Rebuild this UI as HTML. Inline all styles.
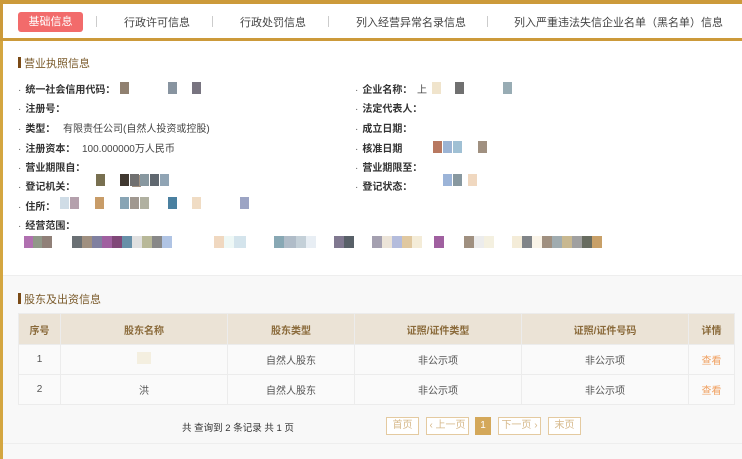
<!DOCTYPE html>
<html><head><meta charset="utf-8"><style>
*{margin:0;padding:0;box-sizing:border-box}
body{width:742px;height:459px;overflow:hidden;background:#fff;font-family:"Liberation Sans","Noto Sans CJK SC",sans-serif;font-size:11px;color:#333;position:relative}
.a{position:absolute}
.tabs{left:0;top:0;width:742px;height:41px;border-top:4px solid #cc9a3a;border-bottom:3px solid #cc9a3a;border-left:3px solid #cc9a3a;background:#fff}
.tab{position:absolute;top:14px;font-size:11px;color:#444}
.sep{position:absolute;top:16px;width:1px;height:11px;background:#ccc}
.lb{position:absolute;left:0;top:41px;width:3px;height:418px;background:#d4a640}
.tt{font-size:11px;color:#7a5a2a}
.tt:before{content:"";display:inline-block;width:3px;height:11px;background:#7a4a16;margin-right:3px;vertical-align:-1px}
.lab{font-weight:bold;font-size:10px;color:#333}
.lab:before{content:"·";margin-right:4px;font-weight:normal;color:#666}
.v{font-size:10px;color:#444}
.m{position:absolute;width:9px;height:12px}
.sec2{left:3px;top:275px;width:739px;height:184px;background:#f8f8f8;border-top:1px solid #eee}
table{position:absolute;left:18px;top:313px;width:717px;border-collapse:collapse;font-size:10px}
td,th{border:1px solid #ececec;text-align:center;height:30px;color:#555;font-weight:normal}
th{background:#ebe3d6;color:#8a6a3a;font-weight:bold;height:31px}
.pg{position:absolute;top:417px;height:18px;border:1px solid #e4caa0;color:#d6b88a;font-size:10px;text-align:center;line-height:16px;background:#fff}
</style></head><body>
<div class="a tabs"></div>
<div class="lb"></div>
<div class="a" style="left:18px;top:12px;width:65px;height:20px;background:#f26b6b;border-radius:3px;color:#fff;font-size:11px;text-align:center;line-height:20px">基础信息</div>
<div class="sep" style="left:96px"></div>
<div class="tab" style="left:124px">行政许可信息</div>
<div class="sep" style="left:212px"></div>
<div class="tab" style="left:240px">行政处罚信息</div>
<div class="sep" style="left:328px"></div>
<div class="tab" style="left:356px">列入经营异常名录信息</div>
<div class="sep" style="left:487px"></div>
<div class="tab" style="left:514px">列入严重违法失信企业名单（黑名单）信息</div>

<div class="a tt" style="left:18px;top:55px">营业执照信息</div>
<div class="a lab" style="left:18px;top:81px">统一社会信用代码：</div>
<div class="a lab" style="left:18px;top:100px">注册号：</div>
<div class="a lab" style="left:18px;top:120px">类型：</div><div class="a v" style="left:63px;top:120px">有限责任公司(自然人投资或控股)</div>
<div class="a lab" style="left:18px;top:140px">注册资本：</div><div class="a v" style="left:82px;top:140px">100.000000万人民币</div>
<div class="a lab" style="left:18px;top:159px">营业期限自：</div>
<div class="a lab" style="left:18px;top:178px">登记机关：</div>
<div class="a lab" style="left:18px;top:198px">住所：</div>
<div class="a lab" style="left:18px;top:217px">经营范围：</div>
<div class="a lab" style="left:355px;top:81px">企业名称：</div><div class="a v" style="left:417px;top:81px">上</div>
<div class="a lab" style="left:355px;top:100px">法定代表人：</div>
<div class="a lab" style="left:355px;top:120px">成立日期：</div>
<div class="a lab" style="left:355px;top:140px">核准日期</div>
<div class="a lab" style="left:355px;top:159px">营业期限至：</div>
<div class="a lab" style="left:355px;top:178px">登记状态：</div>

<div class="m" style="left:120px;top:82px;background:#908070"></div>
<div class="m" style="left:168px;top:82px;background:#8894a0"></div>
<div class="m" style="left:192px;top:82px;background:#787480"></div>
<div class="m" style="left:432px;top:82px;background:#f0e4cc"></div>
<div class="m" style="left:455px;top:82px;background:#707070"></div>
<div class="m" style="left:503px;top:82px;background:#98acb4"></div>
<div class="m" style="left:433px;top:141px;background:#b87860"></div>
<div class="m" style="left:443px;top:141px;background:#9cb4d4"></div>
<div class="m" style="left:453px;top:141px;background:#a0c0d4"></div>
<div class="m" style="left:478px;top:141px;background:#a09080"></div>
<div class="m" style="left:132px;top:175px;background:#a09080"></div>
<div class="m" style="left:96px;top:174px;background:#787050"></div>
<div class="m" style="left:120px;top:174px;background:#403830"></div>
<div class="m" style="left:130px;top:174px;background:#707070"></div>
<div class="m" style="left:140px;top:174px;background:#8898a0"></div>
<div class="m" style="left:150px;top:174px;background:#606870"></div>
<div class="m" style="left:160px;top:174px;background:#90a4b4"></div>
<div class="m" style="left:443px;top:174px;background:#9cb4d8"></div>
<div class="m" style="left:453px;top:174px;background:#8898a0"></div>
<div class="m" style="left:468px;top:174px;background:#f0d8c0"></div>
<div class="m" style="left:60px;top:197px;background:#cfdce6"></div>
<div class="m" style="left:70px;top:197px;background:#b4a0ac"></div>
<div class="m" style="left:95px;top:197px;background:#c89c68"></div>
<div class="m" style="left:120px;top:197px;background:#88a4b4"></div>
<div class="m" style="left:130px;top:197px;background:#a09890"></div>
<div class="m" style="left:140px;top:197px;background:#b0b0a0"></div>
<div class="m" style="left:168px;top:197px;background:#4a80a0"></div>
<div class="m" style="left:192px;top:197px;background:#f0dcc4"></div>
<div class="m" style="left:240px;top:197px;background:#9ca4c4"></div>
<div class="a" style="left:24px;top:236px;height:12px;width:600px;background:linear-gradient(90deg,#b070b0 0 9px,#909888 9px 18px,#908078 18px 28px,transparent 28px 48px,#6a7074 48px 58px,#a09080 58px 68px,#8080a0 68px 78px,#a060a0 78px 88px,#804878 88px 98px,#6890a8 98px 108px,#e0e0e0 108px 118px,#b8b898 118px 128px,#888 128px 138px,#b0c4e4 138px 148px,transparent 148px 190px,#f0d8c0 190px 200px,#eef8f6 200px 210px,#d4e4ec 210px 222px,transparent 222px 250px,#88a8b4 250px 260px,#b0bcc8 260px 272px,#c4d0d8 272px 282px,#e8eef4 282px 292px,transparent 292px 310px,#807890 310px 320px,#586068 320px 330px,transparent 330px 348px,#a4a0b0 348px 358px,#ece4d8 358px 368px,#b4bcdc 368px 378px,#e0c8a0 378px 388px,#f4ecd8 388px 398px,transparent 398px 410px,#a060a0 410px 420px,transparent 420px 440px,#a09080 440px 450px,#ececec 450px 460px,#f4f0e0 460px 470px,transparent 470px 488px,#f4ecd8 488px 498px,#808488 498px 508px,#faf4e8 508px 518px,#a09080 518px 528px,#a0acb0 528px 538px,#c8b890 538px 548px,#a0a0a0 548px 558px,#686c60 558px 568px,#c8a068 568px 578px,transparent 578px)"></div>

<div class="a sec2"></div>
<div class="a tt" style="left:18px;top:291px">股东及出资信息</div>
<table>
<tr><th style="width:42px">序号</th><th style="width:167px">股东名称</th><th style="width:127px">股东类型</th><th style="width:167px">证照/证件类型</th><th style="width:167px">证照/证件号码</th><th>详情</th></tr>
<tr style="background:#fafafa"><td>1</td><td><span style="display:inline-block;width:14px;height:12px;background:#f4efe0"></span></td><td>自然人股东</td><td>非公示项</td><td>非公示项</td><td style="color:#f0a060">查看</td></tr>
<tr style="background:#fafafa"><td>2</td><td>洪</td><td>自然人股东</td><td>非公示项</td><td>非公示项</td><td style="color:#f0a060">查看</td></tr>
</table>
<div class="a" style="left:182px;top:420px;font-size:9.5px;color:#333">共 查询到 2 条记录 共 1 页</div>
<div class="pg" style="left:386px;width:33px">首页</div>
<div class="pg" style="left:426px;width:43px">‹ 上一页</div>
<div class="pg" style="left:475px;width:16px;background:#d4a85a;border-color:#d4a85a;color:#fff">1</div>
<div class="pg" style="left:498px;width:43px">下一页 ›</div>
<div class="pg" style="left:548px;width:33px">末页</div>
<div class="a" style="left:3px;top:443px;width:739px;height:1px;background:#eee"></div>
</body></html>
